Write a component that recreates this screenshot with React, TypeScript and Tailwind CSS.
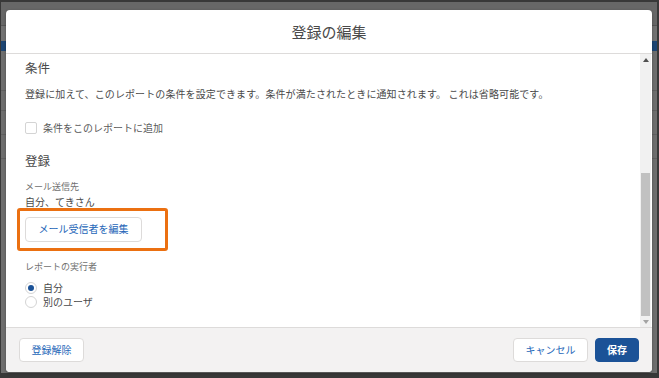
import React from "react";

const font = { fontFamily: '"Noto Sans CJK JP", "Noto Sans", sans-serif' };

function Radio({ checked, label }: { checked?: boolean; label: string }) {
  return (
    <div className="flex items-center h-[14px]">
      <span className="w-[12px] h-[12px] rounded-full border border-[#d4d4d4] bg-white flex items-center justify-center">
        {checked && <span className="w-[6px] h-[6px] rounded-full bg-[#1b5297]" />}
      </span>
      <span className="ml-[6px] text-[10px] leading-[14px] text-[#4a4a4a]">{label}</span>
    </div>
  );
}

export default function App() {
  return (
    <div className="relative w-[659px] h-[378px] overflow-hidden bg-[#383838]" style={font}>
      {/* dimmed background page */}
      <div className="ml-[1px] mr-[2px] mt-[2px] h-[371px] bg-[#6e6e6e] flex flex-col">
        <div className="h-[24px] bg-[#676767] border-b border-[#555]" />
        <div className="h-[15px] bg-[#727272]" />
        <div className="h-[10px] bg-[#1d4573]" />
        <div className="h-[40px] border-b border-[#606060]" />
        <div className="h-[20px] border-b border-[#606060]" />
        <div className="h-[24px] border-b border-[#606060]" />
        <div className="h-[24px] border-b border-[#606060]" />
      </div>

      {/* modal */}
      <div className="absolute left-[6px] top-[10px] w-[646px] h-[362px] bg-white rounded-[4px] flex flex-col overflow-hidden shadow-[0_1px_3px_rgba(0,0,0,0.3)]">
        {/* header */}
        <div className="h-[44px] flex items-center justify-center border-b border-[#dddbda] shrink-0">
          <span className="text-[15px] leading-[20px] text-[#4a4a4a] pt-[1px]">登録の編集</span>
        </div>

        {/* body */}
        <div className="flex h-[273px] shrink-0">
          <div className="flex-1 pl-[19px] flex flex-col">
            <div className="mt-[6px] text-[12.5px] leading-[16px] text-[#4a4a4a]">条件</div>
            <div className="mt-[11px] text-[10px] leading-[14px] text-[#4a4a4a] whitespace-nowrap tracking-[0.1px]">
              登録に加えて、このレポートの条件を設定できます。条件が満たされたときに通知されます。 これは省略可能です。
            </div>
            <div className="mt-[20px] flex items-center h-[13px]">
              <span className="w-[12px] h-[12px] rounded-[2px] border border-[#d4d4d4] bg-white" />
              <span className="ml-[6px] text-[10px] leading-[14px] text-[#5a5a5a]">条件をこのレポートに追加</span>
            </div>
            <div className="mt-[19px] text-[12.5px] leading-[16px] text-[#4a4a4a]">登録</div>
            <div className="mt-[12px] text-[9px] leading-[12px] text-[#707070]">メール送信先</div>
            <div className="mt-[2px] text-[10px] leading-[14px] text-[#4a4a4a]">自分、てきさん</div>
            <div className="mt-[5px] relative self-start">
              <button className="w-[117px] h-[25px] rounded-[4px] border border-[#dddbda] bg-white text-[10px] leading-[14px] text-[#2566b8]">
                メール受信者を編集
              </button>
              <div className="absolute left-[-8px] top-[-6px] w-[151px] h-[43px] border-[3px] border-[#eb7011] rounded-[3px] pointer-events-none" />
            </div>
            <div className="mt-[19px] text-[9px] leading-[12px] text-[#707070]">レポートの実行者</div>
            <div className="mt-[8px] flex flex-col">
              <Radio checked label="自分" />
              <Radio label="別のユーザ" />
            </div>
          </div>
          {/* scrollbar */}
          <div className="w-[11px] mr-[1px] bg-[#f1f1f1] flex flex-col">
            <div className="h-[11px] flex items-center justify-center">
              <svg width="6" height="4" viewBox="0 0 6 4"><path d="M3 0L6 4H0Z" fill="#505050" /></svg>
            </div>
            <div className="flex-1 flex flex-col justify-end">
              <div className="h-[143px] bg-[#c1c1c1] mx-[1px]" />
            </div>
            <div className="h-[11px] flex items-center justify-center">
              <svg width="6" height="4" viewBox="0 0 6 4"><path d="M0 0H6L3 4Z" fill="#a3a3a3" /></svg>
            </div>
          </div>
        </div>

        {/* footer */}
        <div className="flex-1 bg-[#f3f2f2] border-t border-[#dddbda] flex items-center justify-between px-[13px]">
          <button className="w-[65px] h-[24px] rounded-[4px] border border-[#dddbda] bg-white text-[10px] leading-[14px] text-[#2566b8]">
            登録解除
          </button>
          <div className="flex items-center gap-[7px]">
            <button className="w-[75px] h-[24px] rounded-[4px] border border-[#dddbda] bg-white text-[10px] leading-[14px] text-[#2566b8]">
              キャンセル
            </button>
            <button className="w-[44px] h-[24px] rounded-[4px] border border-[#1b5297] bg-[#1b5297] text-[10px] leading-[14px] font-bold text-white">
              保存
            </button>
          </div>
        </div>
      </div>
    </div>
  );
}
